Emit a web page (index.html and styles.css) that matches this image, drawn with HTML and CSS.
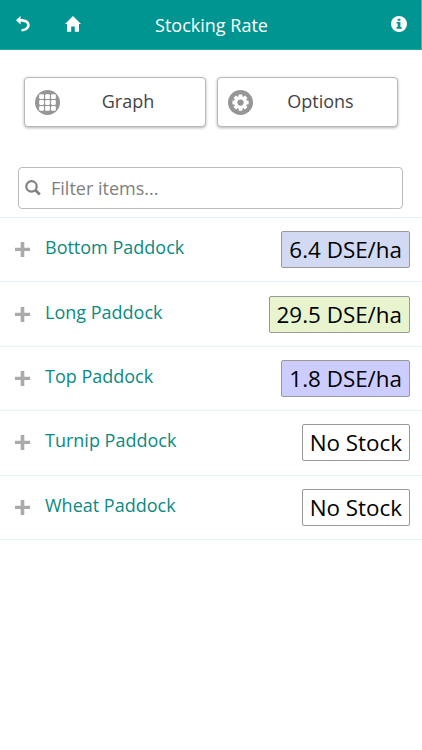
FILE: index.html
```html
<!DOCTYPE html>
<html lang="en">
<head>
<meta charset="utf-8">
<meta name="viewport" content="width=device-width, initial-scale=1">
<title>Stocking Rate</title>
<link rel="stylesheet" href="styles.css">
</head>
<body>
<header class="bar">
  <div class="bar-side">
    <svg class="icon-back" viewBox="0 0 14 16" width="14" height="16"><path d="M0 4.200L4.600 0V3C10.500 3 13.700 5.200 13.700 9C13.700 12.800 10.300 14.800 5.800 15.500L5 13.400C8.600 12.800 11 11.500 11 9C11 6.700 8.600 5.700 4.600 5.700V8.600Z" fill="#fff"/></svg>
    <svg class="icon-home" viewBox="0 0 16 16" width="16" height="16"><path d="M8 0L0 8H2V15.800H6.200V10.500H9.800V15.800H14V8H16Z" fill="#fff"/></svg>
  </div>
  <h1 class="title">Stocking Rate</h1>
  <div class="bar-side bar-end">
    <svg viewBox="0 0 16 16" width="16" height="16"><circle cx="8" cy="8" r="8" fill="#fff"/><path d="M6.600 2.700h2.800v2H6.600zM5.500 6h3.900v5h1.300v1.700H5.500V11h1.200V7.600H5.500z" fill="#009590"/></svg>
  </div>
</header>
<main>
  <div class="actions">
    <button class="action action-graph">
      <svg viewBox="0 0 24 24" width="25" height="25"><circle cx="12" cy="12" r="12" fill="#969696"/><g fill="#fff"><rect x="4" y="4" width="4.600" height="4.600" rx="1"/><rect x="9.700" y="4" width="4.600" height="4.600" rx="1"/><rect x="15.400" y="4" width="4.600" height="4.600" rx="1"/><rect x="4" y="9.700" width="4.600" height="4.600" rx="1"/><rect x="9.700" y="9.700" width="4.600" height="4.600" rx="1"/><rect x="15.400" y="9.700" width="4.600" height="4.600" rx="1"/><rect x="4" y="15.400" width="4.600" height="4.600" rx="1"/><rect x="9.700" y="15.400" width="4.600" height="4.600" rx="1"/><rect x="15.400" y="15.400" width="4.600" height="4.600" rx="1"/></g></svg>
      <span>Graph</span>
    </button>
    <button class="action action-options">
      <svg viewBox="0 0 24 24" width="25" height="25"><circle cx="12" cy="12" r="12" fill="#969696"/><g fill="#fff"><circle cx="12" cy="12" r="6"/><path id="tooth" d="M10.400 4.200h3.200l.5 3h-4.200z"/><use href="#tooth" transform="rotate(45 12 12)"/><use href="#tooth" transform="rotate(90 12 12)"/><use href="#tooth" transform="rotate(135 12 12)"/><use href="#tooth" transform="rotate(180 12 12)"/><use href="#tooth" transform="rotate(225 12 12)"/><use href="#tooth" transform="rotate(270 12 12)"/><use href="#tooth" transform="rotate(315 12 12)"/></g><circle cx="12" cy="12" r="3" fill="#969696"/></svg>
      <span>Options</span>
    </button>
  </div>
  <label class="filter">
    <svg viewBox="0 0 16 16" width="16" height="16" fill="none" stroke="#808080"><circle cx="6.500" cy="6.400" r="5.200" stroke-width="2.200"/><path d="M10.200 10L14.800 14.400" stroke-width="2.800"/></svg>
    <input type="text" placeholder="Filter items...">
  </label>
  <ul class="list">
    <li class="row"><svg class="plus" viewBox="0 0 15 15" width="15" height="15"><path d="M5.700 0h3.600v5.700H15v3.200H9.300V15H5.700V8.900H0V5.700h5.700z"/></svg><span class="name">Bottom Paddock</span><span class="badge badge-mid">6.4 DSE/ha</span></li>
    <li class="row"><svg class="plus" viewBox="0 0 15 15" width="15" height="15"><path d="M5.700 0h3.600v5.700H15v3.200H9.300V15H5.700V8.900H0V5.700h5.700z"/></svg><span class="name">Long Paddock</span><span class="badge badge-high">29.5 DSE/ha</span></li>
    <li class="row"><svg class="plus" viewBox="0 0 15 15" width="15" height="15"><path d="M5.700 0h3.600v5.700H15v3.200H9.300V15H5.700V8.900H0V5.700h5.700z"/></svg><span class="name">Top Paddock</span><span class="badge badge-low">1.8 DSE/ha</span></li>
    <li class="row"><svg class="plus" viewBox="0 0 15 15" width="15" height="15"><path d="M5.700 0h3.600v5.700H15v3.200H9.300V15H5.700V8.900H0V5.700h5.700z"/></svg><span class="name">Turnip Paddock</span><span class="badge">No Stock</span></li>
    <li class="row"><svg class="plus" viewBox="0 0 15 15" width="15" height="15"><path d="M5.700 0h3.600v5.700H15v3.200H9.300V15H5.700V8.900H0V5.700h5.700z"/></svg><span class="name">Wheat Paddock</span><span class="badge">No Stock</span></li>
  </ul>
</main>
</body>
</html>
```
FILE: styles.css
```css
* { box-sizing: border-box; }
body {
  margin: 0;
  background: #fff;
  font-family: "Open Sans", "Noto Sans", sans-serif;
}
svg { display: block; flex: none; }
.bar {
  display: grid;
  grid-template-columns: 1fr auto 1fr;
  align-items: center;
  height: 50px;
  padding: 0 14px 2px 16px;
  background: #009590;
  border-right: 1px solid #4fb3af;
  border-bottom: 1px solid #2aa6a0;
}
.bar-side { display: flex; align-items: center; }
.bar-end { justify-content: flex-end; }
.icon-home { margin-left: 35px; }
.title {
  margin: 2px 0 0;
  color: #fff;
  font-size: 18px;
  font-weight: 400;
  line-height: 24px;
}
.actions {
  display: flex;
  gap: 11px;
  padding: 27px 24px 0;
}
.action {
  display: flex;
  align-items: center;
  height: 50px;
  padding: 0 9px 0 10px;
  border: 1px solid #b8b8b8;
  border-radius: 4px;
  background: #fff;
  box-shadow: 0 1px 3px rgba(0, 0, 0, .3);
  color: #444;
  font: 18px/24px "Open Sans", sans-serif;
}
.action-graph { width: 182px; }
.action-options { width: 181px; }
.action span { flex: 1; margin-bottom: 2px; text-align: center; }
.filter {
  display: flex;
  align-items: center;
  height: 42px;
  margin: 40px 19px 8px 18px;
  padding: 0 6px;
  border: 1px solid #bbb;
  border-radius: 4px;
}
.filter input {
  flex: 1;
  min-width: 0;
  margin-left: 10px;
  padding: 0;
  border: 0;
  outline: 0;
  background: none;
  font: 18px/24px "Open Sans", sans-serif;
}
.filter input::placeholder { color: #808080; opacity: 1; }
.list {
  margin: 0;
  padding: 0;
  list-style: none;
  border-top: 1px solid #e5f2f7;
}
.row {
  display: flex;
  align-items: center;
  height: 64.4px;
  padding: 0 12px 0 15px;
  border-bottom: 1px solid #e5f4f6;
}
.plus { fill: #aaa; }
.name {
  flex: 1;
  margin: -5px 0 0 15px;
  color: #0a8a82;
  font-size: 18px;
  line-height: 24px;
}
.badge {
  height: 37px;
  padding: 0 7px;
  border: 1px solid #999;
  border-radius: 2px;
  background: #fff;
  color: #000;
  font-size: 22.4px;
  line-height: 36px;
  white-space: nowrap;
}
.badge-mid { background: #d2d9f3; }
.badge-high { background: #e7f4cd; }
.badge-low { background: #ccccff; }
```
